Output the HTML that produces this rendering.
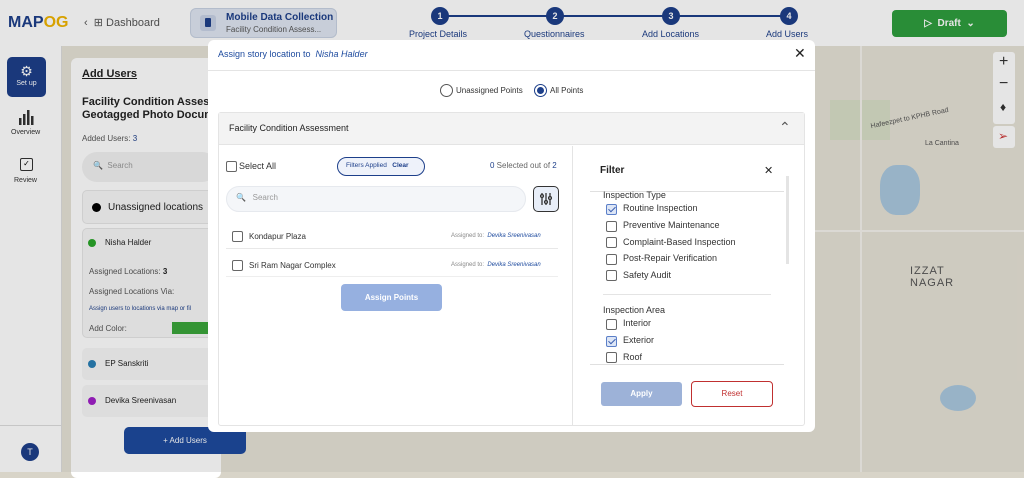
<!DOCTYPE html><html><head><style>
*{box-sizing:border-box;margin:0;padding:0}
body{width:1024px;height:472px;overflow:hidden;font-family:"Liberation Sans",sans-serif;position:relative;background:#d8d4c8}
.a{position:absolute}
.cb{position:absolute;width:11px;height:11px;border:1px solid #666;border-radius:2px;background:#fff}
.cb.on{border-color:#5b7fc8;background:#dde6f6}
.cb.on:after{content:"";position:absolute;left:3px;top:0px;width:3px;height:6px;border:solid #3b5fb0;border-width:0 1.5px 1.5px 0;transform:rotate(45deg)}
.t{position:absolute;font-size:10px;color:#333;white-space:nowrap}
</style></head><body>
<div class="a" style="left:62px;top:46px;width:962px;height:426px;background:#e6e2d6"></div>
<div class="a" style="left:940px;top:385px;width:36px;height:26px;background:#aac8de;border-radius:50%"></div>
<div class="a" style="left:880px;top:165px;width:40px;height:50px;background:#aac8de;border-radius:40%"></div>
<div class="a" style="left:830px;top:100px;width:60px;height:40px;background:#d8dfc8"></div>
<div class="a" style="left:815px;top:230px;width:209px;height:2px;background:#f4f2ec"></div>
<div class="a" style="left:860px;top:46px;width:2px;height:426px;background:#f4f2ec"></div>
<div class="t" style="left:870px;top:115px;font-size:7px;color:#555;transform:rotate(-12deg)">Hafeezpet to KPHB Road</div>
<div class="t" style="left:925px;top:140px;font-size:7px;color:#555">La Cantina</div>
<div class="t" style="left:910px;top:265px;font-size:11px;color:#555;letter-spacing:1px">IZZAT<br>NAGAR</div>
<div class="a" style="left:993px;top:52px;width:22px;height:72px;background:#fff;border-radius:3px"></div>
<div class="t" style="left:999px;top:53px;font-size:16px;color:#333">+</div>
<div class="t" style="left:999px;top:75px;font-size:16px;color:#333">−</div>
<div class="t" style="left:1000px;top:100px;font-size:12px;color:#333">♦</div>
<div class="a" style="left:993px;top:126px;width:22px;height:22px;background:#fff;border-radius:3px"></div>
<div class="t" style="left:998px;top:129px;font-size:12px;color:#c33">➢</div>
<div class="a" style="left:0;top:0;width:1024px;height:46px;background:#fff"></div>
<div class="t" style="left:8px;top:14px;font-size:16px;font-weight:bold;color:#1d3f8a">MAP<span style="color:#f0b400">OG</span></div>
<div class="t" style="left:84px;top:16px;font-size:11px;color:#555">‹ &nbsp;⊞ Dashboard</div>
<div class="a" style="left:190px;top:8px;width:147px;height:30px;background:#dfe6f2;border:1px solid #c8d2e2;border-radius:6px"></div>
<div class="a" style="left:200px;top:15px;width:16px;height:16px;background:#c8d2e6;border-radius:3px"></div>
<div class="a" style="left:205px;top:18px;width:6px;height:9px;background:#1d3f8a;border-radius:1px"></div>
<div class="t" style="left:226px;top:12px;font-size:10px;font-weight:bold;color:#1d3f8a">Mobile Data Collection</div>
<div class="t" style="left:226px;top:25px;font-size:8px;color:#555">Facility Condition Assess...</div>
<div class="a" style="left:440px;top:15px;width:350px;height:2px;background:#1d3f8a"></div>
<div class="a" style="left:431px;top:7px;width:18px;height:18px;border-radius:50%;background:#1d3f8a;color:#fff;font-size:9px;text-align:center;line-height:18px;font-weight:bold">1</div>
<div class="a" style="left:546px;top:7px;width:18px;height:18px;border-radius:50%;background:#1d3f8a;color:#fff;font-size:9px;text-align:center;line-height:18px;font-weight:bold">2</div>
<div class="a" style="left:662px;top:7px;width:18px;height:18px;border-radius:50%;background:#1d3f8a;color:#fff;font-size:9px;text-align:center;line-height:18px;font-weight:bold">3</div>
<div class="a" style="left:780px;top:7px;width:18px;height:18px;border-radius:50%;background:#1d3f8a;color:#fff;font-size:9px;text-align:center;line-height:18px;font-weight:bold">4</div>
<div class="t" style="left:409px;top:29px;font-size:9px;color:#1d3f8a">Project Details</div>
<div class="t" style="left:524px;top:29px;font-size:9px;color:#1d3f8a">Questionnaires</div>
<div class="t" style="left:642px;top:29px;font-size:9px;color:#1d3f8a">Add Locations</div>
<div class="t" style="left:766px;top:29px;font-size:9px;color:#1d3f8a">Add Users</div>
<div class="a" style="left:892px;top:10px;width:115px;height:27px;background:#2e9e3e;border-radius:4px;color:#fff;font-size:10px;font-weight:bold;line-height:27px;text-align:center">▷ &nbsp;Draft &nbsp;⌄</div>
<div class="a" style="left:0;top:46px;width:62px;height:426px;background:#fff;border-right:1px solid #ddd"></div>
<div class="a" style="left:7px;top:57px;width:39px;height:40px;background:#1d3f8a;border-radius:5px;color:#fff;text-align:center;font-size:7px;padding-top:6px"><span style="font-size:14px">⚙</span><br>Set up</div>
<svg class="a" style="left:18px;top:110px" width="16" height="15"><rect x="1" y="8" width="2.5" height="7" fill="#333"/><rect x="5" y="4" width="2.5" height="11" fill="#333"/><rect x="9" y="0" width="2.5" height="15" fill="#333"/><rect x="13" y="6" width="2.5" height="9" fill="#333"/></svg>
<div class="t" style="left:11px;top:129px;font-size:7px;color:#333">Overview</div>
<div class="a" style="left:20px;top:158px;width:13px;height:13px;border:1.5px solid #333;border-radius:2px;font-size:8px;text-align:center;line-height:10px">✓</div>
<div class="t" style="left:14px;top:177px;font-size:7px;color:#333">Review</div>
<div class="a" style="left:0;top:425px;width:62px;height:1px;background:#ddd"></div>
<div class="a" style="left:21px;top:443px;width:18px;height:18px;border-radius:50%;background:#1d3f8a;color:#fff;font-size:9px;text-align:center;line-height:18px">T</div>
<div class="a" style="left:71px;top:58px;width:150px;height:420px;background:#fff;border-radius:6px"></div>
<div class="t" style="left:82px;top:68px;font-size:11px;font-weight:bold;color:#222;text-decoration:underline">Add Users</div>
<div class="t" style="left:82px;top:96px;font-size:11px;font-weight:bold;color:#222;line-height:13px">Facility Condition Assess<br>Geotagged Photo Docum</div>
<div class="t" style="left:82px;top:134px;font-size:8px;color:#555">Added Users: <span style="color:#1d3f8a">3</span></div>
<div class="a" style="left:82px;top:152px;width:135px;height:30px;background:#f1f1f1;border-radius:15px"></div>
<div class="t" style="left:93px;top:161px;font-size:8px;color:#999">🔍 &nbsp;Search</div>
<div class="a" style="left:82px;top:190px;width:135px;height:34px;background:#f6f6f6;border-radius:5px;border:1px solid #e6e6e6"></div>
<div class="a" style="left:92px;top:203px;width:9px;height:9px;border-radius:50%;background:#000"></div>
<div class="t" style="left:108px;top:202px;font-size:10px;color:#222">Unassigned locations</div>
<div class="a" style="left:82px;top:228px;width:135px;height:110px;background:#f6f6f6;border-radius:5px;border:1px solid #e6e6e6"></div>
<div class="a" style="left:88px;top:239px;width:8px;height:8px;border-radius:50%;background:#2aa52a"></div>
<div class="t" style="left:105px;top:238px;font-size:8px;color:#222">Nisha Halder</div>
<div class="t" style="left:89px;top:267px;font-size:8px;color:#555">Assigned Locations: <b style="color:#222">3</b></div>
<div class="t" style="left:89px;top:287px;font-size:8px;color:#555">Assigned Locations Via:</div>
<div class="t" style="left:89px;top:306px;font-size:6px;color:#1d3f8a">Assign users to locations via map or fil</div>
<div class="t" style="left:89px;top:324px;font-size:8px;color:#555">Add Color:</div>
<div class="a" style="left:172px;top:322px;width:45px;height:12px;background:#3aa53a"></div>
<div class="a" style="left:82px;top:348px;width:135px;height:32px;background:#f6f6f6;border-radius:5px"></div>
<div class="a" style="left:88px;top:360px;width:8px;height:8px;border-radius:50%;background:#2a7fb5"></div>
<div class="t" style="left:105px;top:359px;font-size:8px;color:#222">EP Sanskriti</div>
<div class="a" style="left:82px;top:385px;width:135px;height:32px;background:#f6f6f6;border-radius:5px"></div>
<div class="a" style="left:88px;top:397px;width:8px;height:8px;border-radius:50%;background:#a020c8"></div>
<div class="t" style="left:105px;top:396px;font-size:8px;color:#222">Devika Sreenivasan</div>
<div class="a" style="left:124px;top:427px;width:122px;height:27px;background:#1d4a9e;border-radius:5px;color:#fff;font-size:8px;text-align:center;line-height:27px">+ Add Users</div>
<div class="a" style="left:0;top:0;width:1024px;height:472px;background:rgba(0,0,0,0.1)"></div>
<div class="a" style="left:208px;top:40px;width:607px;height:392px;background:#fff;border-radius:6px"></div>
<div class="t" style="left:218px;top:49px;font-size:9px;color:#1d4a9e">Assign story location to &nbsp;<i>Nisha Halder</i></div>
<div class="t" style="left:794px;top:45px;font-size:14px;color:#222">✕</div>
<div class="a" style="left:208px;top:70px;width:607px;height:1px;background:#e4e4e4"></div>
<div class="a" style="left:440px;top:84px;width:13px;height:13px;border-radius:50%;border:1px solid #555"></div>
<div class="t" style="left:456px;top:86px;font-size:8px">Unassigned Points</div>
<div class="a" style="left:534px;top:84px;width:13px;height:13px;border-radius:50%;border:1px solid #1d3f8a"></div>
<div class="a" style="left:537px;top:87px;width:7px;height:7px;border-radius:50%;background:#1d3f8a"></div>
<div class="t" style="left:550px;top:86px;font-size:8px">All Points</div>
<div class="a" style="left:218px;top:112px;width:587px;height:314px;border:1px solid #e4e4e4;border-radius:3px"></div>
<div class="a" style="left:219px;top:113px;width:585px;height:32px;background:#f3f3f3;border-bottom:1px solid #e4e4e4"></div>
<div class="t" style="left:229px;top:123px;font-size:9px;color:#222">Facility Condition Assessment</div>
<div class="t" style="left:779px;top:119px;font-size:14px;color:#555">⌃</div>
<div class="a" style="left:572px;top:146px;width:1px;height:279px;background:#e4e4e4"></div>
<div class="cb" style="left:226px;top:161px"></div>
<div class="t" style="left:239px;top:161px;font-size:9px">Select All</div>
<div class="a" style="left:337px;top:157px;width:88px;height:19px;border:1px solid #1d3f8a;border-radius:10px;background:#eef2fa"></div>
<div class="t" style="left:346px;top:162px;font-size:6.5px;color:#1d3f8a">Filters Applied &nbsp;&nbsp;<b>Clear</b></div>
<div class="t" style="left:490px;top:161px;font-size:8px;color:#666"><span style="color:#1d3f8a">0</span> Selected out of <span style="color:#1d3f8a">2</span></div>
<div class="a" style="left:226px;top:186px;width:300px;height:26px;background:#f4f6f9;border:1px solid #e6e9ee;border-radius:13px"></div>
<div class="t" style="left:236px;top:193px;font-size:8px;color:#999">🔍 &nbsp;&nbsp;Search</div>
<div class="a" style="left:533px;top:186px;width:26px;height:26px;border:1px solid #333;border-radius:5px;background:#e8eef8"></div>
<svg class="a" style="left:539px;top:192px" width="14" height="14" stroke="#333" stroke-width="1.3" fill="none"><path d="M3 1v12M7 1v12M11 1v12"/><circle cx="3" cy="4" r="1.4" fill="#e8eef8"/><circle cx="7" cy="10" r="1.4" fill="#e8eef8"/><circle cx="11" cy="6" r="1.4" fill="#e8eef8"/></svg>
<div class="cb" style="left:232px;top:231px"></div>
<div class="t" style="left:249px;top:232px;font-size:8px">Kondapur Plaza</div>
<div class="t" style="left:451px;top:233px;font-size:6px;color:#888">Assigned to: &nbsp;<i style="color:#1d4a9e">Devika Sreenivasan</i></div>
<div class="a" style="left:226px;top:248px;width:332px;height:1px;background:#e8e8e8"></div>
<div class="cb" style="left:232px;top:260px"></div>
<div class="t" style="left:249px;top:261px;font-size:8px">Sri Ram Nagar Complex</div>
<div class="t" style="left:451px;top:262px;font-size:6px;color:#888">Assigned to: &nbsp;<i style="color:#1d4a9e">Devika Sreenivasan</i></div>
<div class="a" style="left:226px;top:276px;width:332px;height:1px;background:#eee"></div>
<div class="a" style="left:341px;top:284px;width:101px;height:27px;background:#96b0e0;border-radius:4px;color:#fff;font-size:8px;font-weight:bold;text-align:center;line-height:27px">Assign Points</div>
<div class="t" style="left:600px;top:165px;font-size:10px;font-weight:bold;color:#222">Filter</div>
<div class="t" style="left:764px;top:164px;font-size:11px;color:#222">✕</div>
<div class="a" style="left:590px;top:191px;width:194px;height:1px;background:#e0e0e0"></div>
<div class="a" style="left:786px;top:176px;width:3px;height:88px;background:#e4e4e4"></div>
<div class="t" style="left:603px;top:190px;font-size:9px">Inspection Type</div>
<div class="cb on" style="left:606px;top:204px"></div><div class="t" style="left:623px;top:203px;font-size:9px">Routine Inspection</div>
<div class="cb" style="left:606px;top:221px"></div><div class="t" style="left:623px;top:220px;font-size:9px">Preventive Maintenance</div>
<div class="cb" style="left:606px;top:237px"></div><div class="t" style="left:623px;top:237px;font-size:9px">Complaint-Based Inspection</div>
<div class="cb" style="left:606px;top:254px"></div><div class="t" style="left:623px;top:253px;font-size:9px">Post-Repair Verification</div>
<div class="cb" style="left:606px;top:270px"></div><div class="t" style="left:623px;top:270px;font-size:9px">Safety Audit</div>
<div class="a" style="left:603px;top:294px;width:168px;height:1px;background:#e4e4e4"></div>
<div class="t" style="left:603px;top:305px;font-size:9px">Inspection Area</div>
<div class="cb" style="left:606px;top:319px"></div><div class="t" style="left:623px;top:318px;font-size:9px">Interior</div>
<div class="cb on" style="left:606px;top:336px"></div><div class="t" style="left:623px;top:335px;font-size:9px">Exterior</div>
<div class="cb" style="left:606px;top:352px"></div><div class="t" style="left:623px;top:352px;font-size:9px">Roof</div>
<div class="a" style="left:590px;top:364px;width:194px;height:1px;background:#e0e0e0"></div>
<div class="a" style="left:601px;top:382px;width:81px;height:24px;background:#9db2d8;border-radius:3px;color:#fff;font-size:8px;font-weight:bold;text-align:center;line-height:24px">Apply</div>
<div class="a" style="left:691px;top:381px;width:82px;height:26px;border:1px solid #c03030;border-radius:4px;color:#c03030;font-size:8px;text-align:center;line-height:24px">Reset</div>
</body></html>
